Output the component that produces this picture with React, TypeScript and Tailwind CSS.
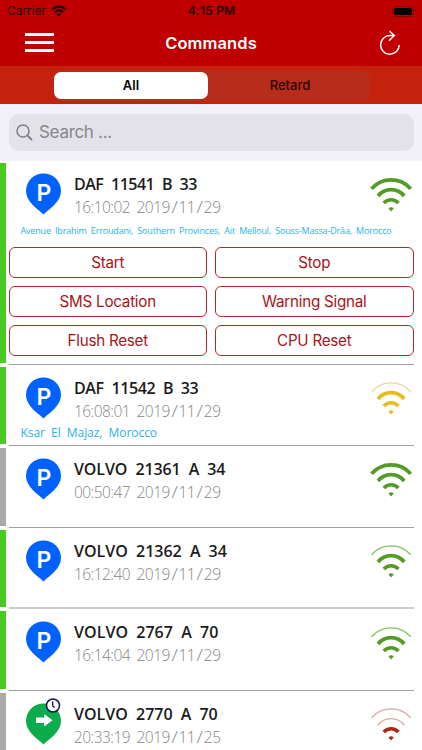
import { Fragment } from "react";
import clsx from "clsx";

type Signal = "full" | "good" | "medium" | "low";

type Vehicle = {
  name: string;
  time: string;
  online: boolean;
  moving?: boolean;
  signal: Signal;
  address?: string;
  smallAddress?: boolean;
  commands?: string[];
  nameClass: string;
  thickLine?: boolean;
};

const vehicles: Vehicle[] = [
  {
    name: "DAF 11541 B 33",
    time: "16:10:02 2019/11/29",
    online: true,
    signal: "full",
    address:
      "Avenue Ibrahim Erroudani, Southern Provinces, Ait Melloul, Souss-Massa-Drâa, Morocco",
    smallAddress: true,
    commands: [
      "Start",
      "Stop",
      "SMS Location",
      "Warning Signal",
      "Flush Reset",
      "CPU Reset",
    ],
    nameClass: "tracking-[-0.5px]",
  },
  {
    name: "DAF 11542 B 33",
    time: "16:08:01 2019/11/29",
    online: true,
    signal: "medium",
    address: "Ksar El Majaz, Morocco",
    nameClass: "tracking-[-0.4px]",
  },
  {
    name: "VOLVO 21361 A 34",
    time: "00:50:47 2019/11/29",
    online: false,
    signal: "full",
    nameClass: "tracking-[-0.1px]",
  },
  {
    name: "VOLVO 21362 A 34",
    time: "16:12:40 2019/11/29",
    online: true,
    signal: "good",
    nameClass: "tracking-[0px]",
    thickLine: true,
  },
  {
    name: "VOLVO 2767 A 70",
    time: "16:14:04 2019/11/29",
    online: true,
    signal: "good",
    nameClass: "tracking-[0.04px]",
  },
  {
    name: "VOLVO 2770 A 70",
    time: "20:33:19 2019/11/25",
    online: false,
    moving: true,
    signal: "low",
    nameClass: "tracking-[0px]",
  },
];

const signals = {
  full: { bars: 3, color: "#549b26", faint: "#549b26" },
  good: { bars: 2, color: "#549b26", faint: "#82c462" },
  medium: { bars: 2, color: "#e9bb1d", faint: "#e8d9a8" },
  low: { bars: 1, color: "#ad2812", faint: "#dba9a2" },
};

function SignalIcon({ signal }: { signal: Signal }) {
  const { bars, color, faint } = signals[signal];
  // inner arc first, so the index tells how many bars are lit
  const arcs = [
    "M13.8 26 A9.8 9.8 0 0 1 28.4 26",
    "M8 19 A16.8 16.8 0 0 1 34.2 19",
    "M1.5 11.8 A26 26 0 0 1 40.7 11.8",
  ];
  return (
    <svg viewBox="0 0 42 36" className="h-9 w-[42px]" fill="none">
      {arcs.map((d, i) => (
        <path
          key={d}
          d={d}
          stroke={i < bars ? color : faint}
          strokeWidth={i < bars ? 3.7 : 1.3}
        />
      ))}
      <path d="M18.5 31.4 Q21.1 28.9 23.7 31.4 L21.1 34.5Z" fill={color} />
    </svg>
  );
}

function Pin({ moving }: { moving?: boolean }) {
  return (
    <svg
      viewBox="0 0 36 42"
      className="-mt-px h-[42px] w-9 shrink-0 overflow-visible"
    >
      <path
        d="M17.5 41.4 C11 35.6 0 28.6 0 17.8 A17.5 17.3 0 0 1 35 17.8 C35 28.6 24 35.6 17.5 41.4Z"
        fill={moving ? "#0aac4b" : "#0062fe"}
      />
      {moving ? (
        <>
          <path
            d="M10 14.6 H18.2 V11 L26.6 17.3 L18.2 23.4 V20 H10Z"
            fill="white"
          />
          <circle cx="27" cy="2.5" r="6.5" fill="white" stroke="#16164a" strokeWidth="1.5" />
          <path d="M26.7 -1.5 V3 L28.7 4.6" fill="none" stroke="#16164a" strokeWidth="1.3" />
        </>
      ) : (
        <text
          x="10.6"
          y="27.6"
          fill="white"
          fontSize="23"
          fontWeight="600"
          fontFamily="Inter, sans-serif"
        >
          P
        </text>
      )}
    </svg>
  );
}

function Time({ value }: { value: string }) {
  const parts = value.split("/");
  return (
    <p className="mt-[0.8px] text-[15.5px] leading-[22px] font-light tracking-[-0.55px] text-[#868686] [word-spacing:3px]">
      {parts.map((part, i) => (
        <Fragment key={i}>
          {i > 0 && (
            <span className="inline-block scale-x-120 px-[2px]">/</span>
          )}
          {part}
        </Fragment>
      ))}
    </p>
  );
}

function CommandButton({ label }: { label: string }) {
  return (
    <button className="flex h-[31px] items-center justify-center rounded-[6px] border border-[#b9262a] bg-white pt-px text-[15.2px] leading-none tracking-[-0.25px] text-[#a91319]">
      {label}
    </button>
  );
}

function VehicleRow({ vehicle }: { vehicle: Vehicle }) {
  const { name, time, online, moving, signal, address, commands } = vehicle;
  return (
    <li
      className={clsx(
        "flex shrink-0 gap-[3px] bg-white",
        commands ? "h-[203.5px]" : "h-[81.5px]",
      )}
    >
      <div
        className={clsx(
          "mt-[2px] mb-[2px] w-[5.5px]",
          online ? "bg-[#47cb20]" : "bg-[#aaaaaa]",
        )}
      />
      <div
        className={clsx(
          "mr-[8.5px] flex flex-1 flex-col",
          vehicle.thickLine
            ? "border-b-2 border-[#cbcbcb]"
            : "border-b border-[#a0a0a4]",
        )}
      >
        <div className="flex h-[55px] pt-[13px] pl-[17px]">
          <Pin moving={moving} />
          <div className="-mt-[0.8px] ml-[12.5px] flex-1 font-['Open_Sans',sans-serif] whitespace-nowrap">
            <h2
              className={clsx(
                "text-[16px] leading-[22px] font-semibold text-[#1b1b1b] [word-spacing:4px]",
                vehicle.nameClass,
              )}
            >
              {name}
            </h2>
            <Time value={time} />
          </div>
          <div className="mt-[2.5px] mr-[1.5px]">
            <SignalIcon signal={signal} />
          </div>
        </div>
        {address && (
          <p
            className={clsx(
              "ml-[12px] font-['Open_Sans',sans-serif] whitespace-nowrap text-[#29b2ea]",
              vehicle.smallAddress
                ? "mt-[6px] h-[21px] text-[9px] leading-[18px] tracking-[-0.165px] [word-spacing:2px]"
                : "mt-[4px] text-[12px] leading-[18px] tracking-[-0.04px] [word-spacing:3px]",
            )}
          >
            {address}
          </p>
        )}
        {commands && (
          <div className="mt-[4px] grid grid-cols-2 gap-x-2 gap-y-[7.75px]">
            {commands.map((c) => (
              <CommandButton key={c} label={c} />
            ))}
          </div>
        )}
      </div>
    </li>
  );
}

function StatusBar() {
  return (
    <div className="flex h-[22px] items-center text-[12px] text-[#260000]">
      <div className="flex flex-1 items-center gap-[5px] pl-[7px]">
        <span className="tracking-[-0.05px]">Carrier</span>
        <svg viewBox="0 0 16 12" className="h-3 w-4" fill="none" stroke="#260000">
          <path d="M1.2 4.6 Q8 -1.6 14.8 4.6" strokeWidth="2.2" />
          <path d="M3.7 7.2 Q8 3.4 12.3 7.2" strokeWidth="2.1" />
          <path d="M5.6 9 Q8 7 10.4 9 L8 11.4Z" fill="#260000" stroke="none" />
        </svg>
      </div>
      <span className="font-semibold tracking-[0.2px]">4:15 PM</span>
      <div className="flex flex-1 items-center justify-end pr-[6px]">
        <div className="h-[11px] w-[22px] rounded-[3.5px] border border-[#7d0000] p-px">
          <div className="h-full rounded-[2px] bg-black" />
        </div>
        <div className="ml-px h-1 w-px rounded-r bg-[#7d0000]" />
      </div>
    </div>
  );
}

export default function App() {
  return (
    <div className="flex h-[750px] w-[422px] flex-col overflow-hidden bg-white font-[Inter,sans-serif]">
      <header className="h-[66px] shrink-0 bg-[#c00000]">
        <StatusBar />
        <div className="flex h-[42px] items-center pr-[21px] pl-[24.5px]">
          <div className="flex-1">
            <div className="-mt-[2px] flex w-[29px] flex-col gap-[5px]">
              <div className="h-[3px] bg-white" />
              <div className="h-[3px] bg-white" />
              <div className="h-[3px] bg-white" />
            </div>
          </div>
          <h1 className="-ml-[3.5px] text-[16.5px] font-semibold tracking-[0.1px] text-white">
            Commands
          </h1>
          <div className="flex flex-1 justify-end pb-px">
            <svg viewBox="0 0 22 26" className="h-[26px] w-[22px]" fill="none" stroke="white" strokeWidth="1.5">
              <path d="M20.2 15 A9.3 9.3 0 1 1 11 5.6 H15" />
              <path d="M10.5 1 L15.3 5.6 L10 10.8" />
            </svg>
          </div>
        </div>
      </header>

      <div className="h-[38px] shrink-0 bg-[#c5220d] px-[52.5px] pt-[4.5px]">
        <div className="flex h-[30px] rounded-[8px] bg-[#b82c1b] p-[1.5px] text-[13px] font-medium">
          <div className="flex w-[154px] items-center justify-center rounded-[7px] bg-white font-semibold text-black">
            All
          </div>
          <div className="flex flex-1 items-center justify-center pl-[4px] text-[#2b0703]">
            Retard
          </div>
        </div>
      </div>

      <div className="h-[57px] shrink-0 bg-[#f2f1f7] px-[8.5px] pt-[10px]">
        <div className="flex h-[37px] items-center gap-[6px] rounded-[10px] bg-[#e3e2e8] pl-[7.5px] text-[17px] tracking-[-0.3px] text-[#85858b]">
          <svg viewBox="0 0 17 17" className="size-[17px]" fill="none" stroke="#7f7f85" strokeWidth="1.5">
            <circle cx="7" cy="7" r="6" />
            <path d="M11.3 11.3 L16 16" strokeWidth="1.9" />
          </svg>
          Search ...
        </div>
      </div>

      <ul className="flex flex-col">
        {vehicles.map((v) => (
          <VehicleRow key={v.name} vehicle={v} />
        ))}
      </ul>
    </div>
  );
}
